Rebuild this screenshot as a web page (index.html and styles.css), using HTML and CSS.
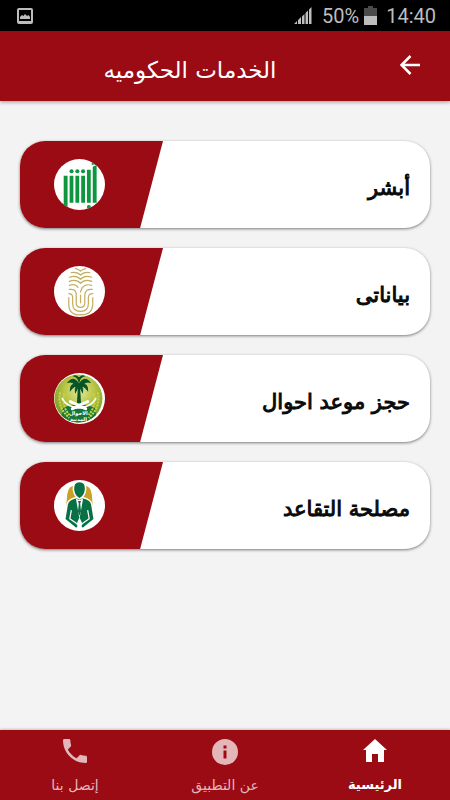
FILE: index.html
```html
<!DOCTYPE html>
<html lang="ar" dir="rtl">
<head>
    <meta charset="UTF-8">
    <meta name="viewport" content="width=device-width, initial-scale=1.0">
    <title>الخدمات الحكوميه</title>
    <link rel="stylesheet" href="styles.css">
</head>
<body>

    <div class="status-bar" dir="ltr">
        <svg class="status-picture" width="16" height="16" viewBox="0 0 16 16">
            <rect x="1" y="1" width="14" height="14" rx="1" fill="none" stroke="#bdbdbd" stroke-width="2"/>
            <path d="M3 11V9l2-2 1.500 1L8 6l2 2 1.500-1L13 9v2z" fill="#bdbdbd"/>
            <path d="M1 13h14v2H1z" fill="#bdbdbd"/>
        </svg>
        <svg width="18" height="17" viewBox="0 0 18 17" fill="#bdbdbd">
            <path d="M0 17l3-3v3zM4 13l3-3v7H4zM8 9.500l2.500-2.500v10H8zM11.500 6L14 3.500V17h-2.500zM15 2.500L17.500 0v17H15z"/>
        </svg>
        <span class="battery-text">50%</span>
        <svg width="13" height="19" viewBox="0 0 13 19">
            <path d="M4 0h5v2h4v9H0V2h4z" fill="#4a4a4a"/>
            <path d="M0 10h13v9H0z" fill="#bdbdbd"/>
        </svg>
        <span class="clock">14:40</span>
    </div>

    <header class="header">
        <button class="back" type="button" aria-label="رجوع">
            <svg width="20" height="20" viewBox="0 0 20 20" fill="none" stroke="#fff" stroke-width="2.500">
                <path d="M10.500 1L1.500 10l9 9M1.500 10H20"/>
            </svg>
        </button>
        <h1 class="title">الخدمات الحكوميه</h1>
    </header>

    <main class="services">
        <a class="card" href="#absher">
            <span class="card-name">أبشر</span>
            <span class="card-side">
                <svg class="logo" viewBox="0 0 50 50">
                    <defs><clipPath id="round"><circle cx="25" cy="25" r="25"/></clipPath></defs>
                    <circle cx="25" cy="25" r="25" fill="#fff"/>
                    <g fill="#0c963e" clip-path="url(#round)">
                        <path d="M9.500 16.500h3.800V50H9.500zM15.300 16.500H19V43h-3.700zM21 16.500h3.700V43H21zM26.700 16.500h3.700V43h-3.700zM32.300 10.500H36V43h-3.700zM38 7.500l3.800-1.500V43H38zM37 4l5-1v2l-5 1z"/>
                        <circle cx="17.200" cy="12" r="2"/>
                        <circle cx="22.900" cy="12" r="2"/>
                        <circle cx="28.500" cy="12" r="2"/>
                        <circle cx="34.200" cy="47" r="2"/>
                    </g>
                </svg>
            </span>
        </a>

        <a class="card" href="#bayanati">
            <span class="card-name">بياناتى</span>
            <span class="card-side">
                <svg class="logo" viewBox="0 0 50 50">
                    <circle cx="25" cy="25" r="25" fill="#fff"/>
                    <g fill="none" stroke="#c3ae62" stroke-width="1.200" stroke-linecap="round">
                        <path d="M21 2.500q3 .5 5 2.500 2-2 5-2.500M17 6.500q6-1 9 2.500 3-3.500 9-2.500"/>
                        <path d="M15 11q7-2.500 11 2 4-4.500 11-2M15 15q7-2.500 11 2 4-4.500 11-2"/>
                        <path d="M15 19q6-2 8.500 2M37 19q-6-2-9.500 2.500-1 2.500-1.500 4"/>
                        <path d="M15 23q6-1 6.800 4v9q0 4.500 4.200 4.500t4.200-4.500v-8q.8-6 7.300-5"/>
                        <path d="M14.500 27q3.800 0 3.800 4v6q0 7.500 7.700 7.500t7.700-7.500v-6q0-4 4.300-4"/>
                        <path d="M14.500 31v7q0 10 11.500 10T38 38v-7M26 28.500V36"/>
                    </g>
                </svg>
            </span>
        </a>

        <a class="card" href="#ahwal">
            <span class="card-name">حجز موعد احوال</span>
            <span class="card-side">
                <svg class="logo" viewBox="0 0 50 50">
                    <defs>
                        <radialGradient id="glow" cx="50%" cy="35%" r="60%">
                            <stop offset="0" stop-color="#e5e79a"/>
                            <stop offset="0.500" stop-color="#b8c545"/>
                            <stop offset="1" stop-color="#6f9d25"/>
                        </radialGradient>
                        <clipPath id="seal"><circle cx="24" cy="25" r="23.500"/></clipPath>
                    </defs>
                    <circle cx="25" cy="25" r="25" fill="#fff"/>
                    <g clip-path="url(#seal)">
                        <path d="M0 0h50v50H0z" fill="url(#glow)"/>
                        <path d="M9 34q16-7 31 0l3 16H6z" fill="#16763a"/>
                        <g fill="none" stroke="#cdd346" stroke-width="2" stroke-dasharray="2 1">
                            <path d="M6 19q-3 15 9 25M43 19q3 15-9 25"/>
                            <path d="M10 20q-3 12 5 21M39 20q3 12-5 21"/>
                        </g>
                        <path d="M23.500 12h2l1 18h-4z" fill="#075426"/>
                        <path d="M24.500 9q-1-5-5-6 2-1 5 2 3-3 5-2-4 1-5 6zM24 10Q19 3 14 9q4-1 6 2-4 0-4 6 3-4 6-4-2 3-1 6 2-4 3.500-7Q26 15 28 19q1-3-1-6 3 0 6 4 0-6-4-6 2-3 6-2-5-6-10 1z" fill="#075426" stroke="#075426"/>
                    </g>
                    <g fill="none" stroke="#fff" stroke-linecap="round">
                        <path d="M8 25q4 7 11 8l12 2M41 25q-4 7-11 8l-12 2" stroke-width="1.500"/>
                        <path d="M16 28q7 3 15 7M33 28q-7 3-15 7" stroke-width="3"/>
                    </g>
                    <text class="seal-text" x="24" y="41" text-anchor="middle">الاحوال</text>
                    <text class="seal-text" x="24" y="47" text-anchor="middle">المدنية</text>
                </svg>
            </span>
        </a>

        <a class="card" href="#retirement">
            <span class="card-name">مصلحة التقاعد</span>
            <span class="card-side">
                <svg class="logo" viewBox="0 0 50 50">
                    <circle cx="25" cy="25" r="25" fill="#fff"/>
                    <path d="M21 5.500q-7 0-8 8.500l-1 11h26l-1-11q-1-8.500-8-8.500z" fill="#c9a125"/>
                    <path d="M21 17.500q-7 2-8 6l-2.500 15L22 48l3-4 3 4 11.500-9.500L37 23.500q-1-4-8-6z" fill="#087044" stroke="#fff" stroke-width="1.500"/>
                    <path d="M25 1.500q6.500 0 6 8-1 7-6 9-5-2-6-9-.5-8 6-8z" fill="#087044" stroke="#fff" stroke-width="1.500"/>
                    <path d="M21.500 18.500L25 38l3.500-19.500-3.500 1z" fill="#fff"/>
                    <path d="M23.500 20.500h3l-.8 2.500.8 8-1.500 4-1.500-4 .8-8z" fill="#087044"/>
                    <path d="M17 29.500L15.500 38l7 5M33 29.500l1.500 8.500-7 5" fill="none" stroke="#fff" stroke-width="1.200"/>
                    <path d="M25 36.500l-3 7 3 4.500 3-4.500z" fill="#fff"/>
                </svg>
            </span>
        </a>
    </main>

    <nav class="tabs">
        <a class="tab active" href="#home">
            <svg width="24" height="24" viewBox="0 0 24 24" fill="currentColor">
                <path d="M12 0L0 11h3v12h6v-8h6v8h6V11h3z"/>
            </svg>
            <span>الرئيسية</span>
        </a>
        <a class="tab" href="#about">
            <svg width="26" height="26" viewBox="0 0 26 26" fill="currentColor">
                <path fill-rule="evenodd" d="M13 0a13 13 0 1 0 0 26 13 13 0 0 0 0-26zM11.500 6.500h3v3h-3zM11.500 11.500h3v8h-3z"/>
            </svg>
            <span>عن التطبيق</span>
        </a>
        <a class="tab" href="#contact">
            <svg width="24" height="24" viewBox="3 3 18 18" fill="currentColor">
                <path d="M6.620 10.790c1.440 2.830 3.760 5.140 6.590 6.590l2.200-2.200c.27-.27.67-.36 1.020-.24 1.120.37 2.330.57 3.570.57.55 0 1 .45 1 1V20c0 .55-.45 1-1 1-9.390 0-17-7.610-17-17 0-.55.45-1 1-1h3.500c.55 0 1 .45 1 1 0 1.250.2 2.450.57 3.570.11.35.03.74-.25 1.020l-2.200 2.200z"/>
            </svg>
            <span>إتصل بنا</span>
        </a>
    </nav>

</body>
</html>
```
FILE: styles.css
```css
body {
    font-family: "DejaVu Sans", sans-serif;
    margin: 0;
    min-height: 100vh;
    display: flex;
    flex-direction: column;
    background: #f3f3f3;
}

a {
    color: inherit;
    text-decoration: none;
}

.status-bar {
    display: flex;
    align-items: center;
    gap: 5px;
    height: 31px;
    padding: 0 14px 0 17px;
    background: #000;
    color: #bdbdbd;
    font-family: Roboto, sans-serif;
    font-size: 20px;
}

.status-picture {
    margin-right: auto;
}

.battery-text {
    margin-left: 5px;
}

.clock {
    margin-left: 4px;
}

.header {
    display: flex;
    align-items: center;
    height: 70px;
    padding-right: 10px;
    background: #9a0b14;
    box-shadow: 0 1px 4px rgba(0, 0, 0, 0.4);
}

.back {
    width: 60px;
    height: 70px;
    padding: 0;
    border: none;
    background: none;
    cursor: pointer;
}

.title {
    flex: 1;
    margin: 8px 0 0;
    color: #fff;
    font-size: 23px;
    font-weight: normal;
    line-height: 32px;
    text-align: center;
}

.services {
    flex: 1;
    display: flex;
    flex-direction: column;
    gap: 20px;
    padding: 40px 20px;
}

.card {
    display: flex;
    align-items: center;
    justify-content: space-between;
    height: 87px;
    border-radius: 25px;
    background: #fff;
    box-shadow: 0 1px 3px rgba(0, 0, 0, 0.5);
    overflow: hidden;
}

.card-name {
    padding: 6px 20px 0 0;
    color: #0a0a0a;
    font-size: 21px;
    line-height: 32px;
    -webkit-text-stroke: 1px #0a0a0a;
}

.card-side {
    box-sizing: border-box;
    display: flex;
    align-items: center;
    justify-content: flex-end;
    width: 143px;
    height: 100%;
    padding-left: 34px;
    background: #9a0b14;
    clip-path: polygon(0 0, 100% 0, 84% 100%, 0 100%);
}

.logo {
    width: 51px;
    height: 51px;
}

.seal-text {
    fill: #fff;
    font-size: 5px;
    font-weight: bold;
}

.tabs {
    display: flex;
    height: 70px;
    background: #9a0b14;
    box-shadow: 0 -1px 2px rgba(0, 0, 0, 0.2);
}

.tab {
    flex: 1;
    display: flex;
    flex-direction: column;
    align-items: center;
    justify-content: space-between;
    box-sizing: border-box;
    padding: 9px 0 5px;
    color: #e3b6b9;
    font-size: 14px;
    line-height: 20px;
}

.tab.active {
    color: #fff;
    font-size: 13px;
    font-weight: bold;
}
```
